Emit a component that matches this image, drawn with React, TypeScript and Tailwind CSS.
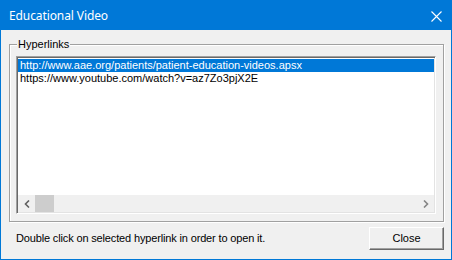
const links = [
  "http://www.aae.org/patients/patient-education-videos.apsx",
  "https://www.youtube.com/watch?v=az7Zo3pjX2E",
];

export default function App() {
  return (
    <div className="w-[452px] h-[260px] flex flex-col border border-[#0078d7] bg-[#f0f0f0] font-['Liberation_Sans',Arial,sans-serif] text-[11px] text-black overflow-hidden">
      {/* Title bar */}
      <div className="h-[29px] shrink-0 bg-[#0078d7] flex items-center justify-between pl-[8px] pr-[9px]">
        <span className="font-['Noto_Sans',sans-serif] text-[12px] text-white tracking-[-0.1px]">Educational Video</span>
        <svg width="11" height="11" viewBox="0 0 11 11" className="mt-[1px]">
          <path d="M0.5 0.5 L10.5 10.5 M10.5 0.5 L0.5 10.5" stroke="#fff" strokeWidth="1.1" />
        </svg>
      </div>

      {/* Hyperlinks group */}
      <div className="relative mt-[14px] ml-[8px] mr-[7px] h-[178px] border border-[#a0a0a0] shadow-[inset_1px_1px_0_#fff,1px_1px_0_#fff] pt-[11px] pl-[6px] pr-[7px] pb-[7px]">
        <span className="absolute left-[7px] top-[-8px] bg-[#f0f0f0] px-[1px] leading-[14px]">Hyperlinks</span>

        {/* Listbox */}
        <div className="h-full flex flex-col border border-t-[#a0a0a0] border-l-[#a0a0a0] border-b-white border-r-white shadow-[inset_1px_1px_0_#696969,inset_-1px_-1px_0_#e3e3e3] p-[1px] bg-white">
          <div className="flex-1 pt-[1px]">
            {links.map((l, i) => (
              <div
                key={l}
                className={
                  i === 0
                    ? "h-[13px] leading-[13px] pl-[2px] whitespace-nowrap bg-[#0078d7] text-white"
                    : "h-[13px] leading-[13px] pl-[2px] whitespace-nowrap"
                }
              >
                {l}
              </div>
            ))}
          </div>

          {/* Horizontal scrollbar */}
          <div className="h-[17px] shrink-0 flex bg-[#f0f0f0]">
            <div className="w-[17px] flex items-center justify-center">
              <svg width="6" height="8" viewBox="0 0 6 8">
                <path d="M5 0.5 L1.5 4 L5 7.5" fill="none" stroke="#606060" strokeWidth="1.6" />
              </svg>
            </div>
            <div className="w-[19px] bg-[#cdcdcd]" />
            <div className="flex-1" />
            <div className="w-[17px] flex items-center justify-center">
              <svg width="6" height="8" viewBox="0 0 6 8">
                <path d="M1 0.5 L4.5 4 L1 7.5" fill="none" stroke="#858585" strokeWidth="1.6" />
              </svg>
            </div>
          </div>
        </div>
      </div>

      {/* Footer */}
      <div className="flex items-center justify-between pl-[15px] pr-[7px] mt-[5px]">
        <span className="tracking-[-0.15px]">Double click on selected hyperlink in order to open it.</span>
        <button className="w-[75px] h-[23px] bg-[#f0f0f0] border border-t-white border-l-white border-r-[#696969] border-b-[#696969] shadow-[inset_-1px_-1px_0_#a0a0a0] text-[11px] leading-none">
          Close
        </button>
      </div>
    </div>
  );
}
